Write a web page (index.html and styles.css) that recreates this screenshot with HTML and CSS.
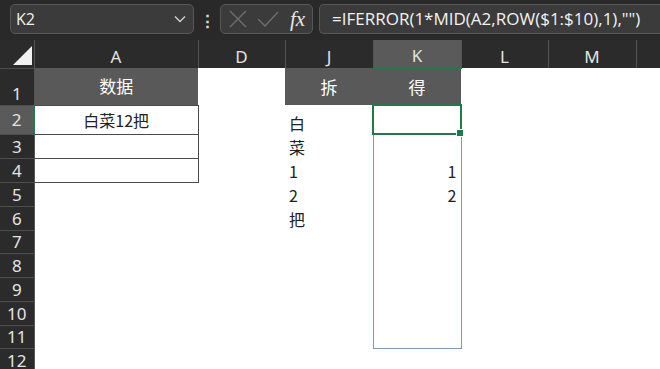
FILE: index.html
```html
<!DOCTYPE html>
<html lang="zh">
<head>
  <meta charset="UTF-8">
  <title>拆分数字</title>
  <link rel="stylesheet" href="styles.css">
</head>
<body>
  <div class="formula-bar">
    <div class="name-box">
      <span>K2</span>
      <svg class="chev" width="12" height="8" viewBox="0 0 12 8"><path d="M1 1.5 L6 6.5 L11 1.5" fill="none" stroke="#d0d0d0" stroke-width="1.4"/></svg>
    </div>
    <div class="dots">⋮</div>
    <div class="fx-box">
      <svg width="20" height="20" viewBox="0 0 20 20"><path d="M2 2 L18 18 M18 2 L2 18" stroke="#6e6e6e" stroke-width="1.4"/></svg>
      <svg width="22" height="18" viewBox="0 0 22 18"><path d="M1 9 L8 16 L21 2" fill="none" stroke="#6e6e6e" stroke-width="1.4"/></svg>
      <span class="fx">fx</span>
    </div>
    <div class="formula">=IFERROR(1*MID(A2,ROW($1:$10),1),"")</div>
  </div>

  <table class="sheet">
    <colgroup>
      <col class="c-hd"><col class="c-a"><col class="c-d"><col class="c-j"><col class="c-k"><col class="c-l"><col class="c-m"><col class="c-n">
    </colgroup>
    <tr class="col-heads">
      <th class="corner"><span class="tri"></span></th>
      <th>A</th><th>D</th><th>J</th><th class="active">K</th><th>L</th><th>M</th><th></th>
    </tr>
    <tr class="r1">
      <th class="rh bottom">1</th>
      <td class="head">数据</td><td></td><td class="head">拆</td><td class="head">得</td><td></td><td></td><td></td>
    </tr>
    <tr class="r2">
      <th class="rh active">2</th>
      <td class="box center">白菜12把</td><td></td><td>白</td><td class="sel"><span class="handle"></span></td><td></td><td></td><td></td>
    </tr>
    <tr>
      <th class="rh">3</th>
      <td class="box"></td><td></td><td>菜</td><td class="range"></td><td></td><td></td><td></td>
    </tr>
    <tr>
      <th class="rh">4</th>
      <td class="box"></td><td></td><td>1</td><td class="range num">1</td><td></td><td></td><td></td>
    </tr>
    <tr>
      <th class="rh">5</th>
      <td></td><td></td><td>2</td><td class="range num">2</td><td></td><td></td><td></td>
    </tr>
    <tr>
      <th class="rh">6</th>
      <td></td><td></td><td>把</td><td class="range"></td><td></td><td></td><td></td>
    </tr>
    <tr class="short">
      <th class="rh">7</th>
      <td></td><td></td><td></td><td class="range"></td><td></td><td></td><td></td>
    </tr>
    <tr>
      <th class="rh">8</th>
      <td></td><td></td><td></td><td class="range"></td><td></td><td></td><td></td>
    </tr>
    <tr>
      <th class="rh">9</th>
      <td></td><td></td><td></td><td class="range"></td><td></td><td></td><td></td>
    </tr>
    <tr>
      <th class="rh">10</th>
      <td></td><td></td><td></td><td class="range"></td><td></td><td></td><td></td>
    </tr>
    <tr class="short">
      <th class="rh">11</th>
      <td></td><td></td><td></td><td class="range last"></td><td></td><td></td><td></td>
    </tr>
    <tr>
      <th class="rh">12</th>
      <td></td><td></td><td></td><td></td><td></td><td></td><td></td>
    </tr>
  </table>
</body>
</html>
```

FILE: styles.css
```css
body {
  margin: 0;
  background: #fff;
  font-family: "Noto Sans CJK SC", "Noto Sans", sans-serif;
  overflow: hidden;
}

/* formula bar */
.formula-bar {
  display: flex;
  align-items: center;
  height: 40px;
  padding: 0 0 2px 10px;
  background: #292929;
  box-sizing: border-box;
}
.name-box {
  width: 184px;
  height: 30px;
  box-sizing: border-box;
  display: flex;
  align-items: center;
  justify-content: space-between;
  padding: 0 7px 0 5px;
  background: #3b3b3b;
  border: 1px solid #575757;
  border-radius: 5px;
  color: #f0f0f0;
  font-family: "Open Sans", sans-serif;
  font-size: 16px;
}
.dots {
  width: 26px;
  text-align: center;
  color: #d8d8d8;
  font-size: 17px;
  font-weight: bold;
}
.fx-box {
  width: 93px;
  height: 30px;
  box-sizing: border-box;
  display: flex;
  align-items: center;
  gap: 9px;
  padding-left: 7px;
  background: #3b3b3b;
  border: 1px solid #575757;
  border-radius: 5px;
}
.fx {
  font-family: "Liberation Serif", serif;
  font-style: italic;
  font-size: 21px;
  color: #e8e8e8;
  margin-left: 2px;
}
.formula {
  flex: 1;
  margin-left: 6px;
  height: 30px;
  line-height: 28px;
  box-sizing: border-box;
  padding-left: 12px;
  background: #3b3b3b;
  border: 1px solid #575757;
  border-right: none;
  border-radius: 5px 0 0 5px;
  color: #f2f2f2;
  font-family: "Open Sans", sans-serif;
  font-size: 17px;
  white-space: nowrap;
  overflow: hidden;
}

/* grid */
.sheet {
  border-collapse: collapse;
  table-layout: fixed;
  width: 660px;
  font-size: 16px;
  color: #222;
}
.c-hd { width: 34px; }
.c-a { width: 164px; }
.c-d { width: 87px; }
.c-j { width: 88px; }
.c-k { width: 88px; }
.c-l { width: 87px; }
.c-m { width: 88px; }

th {
  background: #2b2b2b;
  color: #e4e4e4;
  font-weight: normal;
  font-family: "Noto Sans", sans-serif;
  font-size: 17px;
  padding: 0;
}
.col-heads th {
  height: 27px;
  border-left: 1px solid #555;
  line-height: 23px;
  vertical-align: bottom;
}
.col-heads th.active {
  background: #5a5a5a;
  border-bottom: 2px solid #1f7a4c;
}
.corner { position: relative; border-left: none !important; }
.tri {
  position: absolute;
  right: 2px;
  bottom: 3px;
  border-left: 19px solid transparent;
  border-bottom: 19px solid #f2f2f2;
}
.rh {
  border-top: 1px solid #4e4e4e;
  border-right: 1px solid #555;
  text-align: center;
  line-height: 20px;
  padding-top: 1px;
}
.rh.bottom { vertical-align: bottom; padding-bottom: 1px; }
.rh.active {
  background: #5a5a5a;
  border-right: 2px solid #1f7a4c;
}

tr { height: 24px; }
tr.short { height: 23px; }
tr.r1 { height: 37px; }
tr.r2 { height: 29px; }

td {
  padding: 0 4px;
  vertical-align: bottom;
  line-height: 22px;
  white-space: nowrap;
}
td.head {
  background: #595959;
  color: #fff;
  text-align: center;
  vertical-align: middle;
  font-size: 17px;
}
td.box { border: 1px solid #4a4a4a; }
td.center { text-align: center; vertical-align: middle; }
td.num { text-align: right; }

td.sel {
  position: relative;
  border: 2px solid #1f7a4c;
}
.handle {
  position: absolute;
  right: -4px;
  bottom: -4px;
  width: 6px;
  height: 6px;
  background: #1f7a4c;
  border: 1px solid #fff;
}
td.range {
  border-left: 1px solid #7f97b3;
  border-right: 1px solid #7f97b3;
}
td.range.last { border-bottom: 1px solid #7f97b3; }
```
